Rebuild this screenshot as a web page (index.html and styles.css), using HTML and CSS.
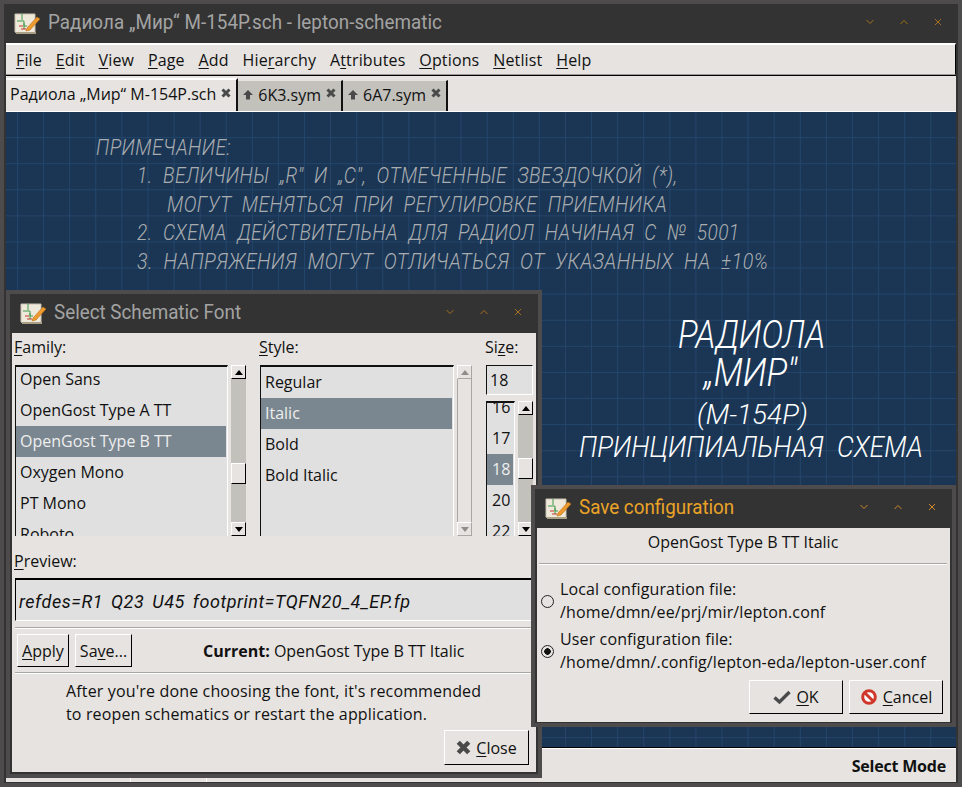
FILE: index.html
```html
<!DOCTYPE html>
<html lang="en">
<head>
    <meta charset="UTF-8">
    <title>lepton-schematic</title>
    <link rel="stylesheet" href="styles.css">
</head>
<body>
    <svg class="defs" width="0" height="0">
        <symbol id="app-icon" viewBox="0 0 26 24">
            <path d="M1 3h20v19H3l-2-1z" fill="#efe9dc" stroke="#c9c2b0"/>
            <path d="M2 22h20" stroke="#a89f85" stroke-width="2"/>
            <path d="M8 3v6M3 10h7v5h3M10 12v6" stroke="#3d9a4a" fill="none"/>
            <path d="M5 15h4M7 18h5" stroke="#c0392b" fill="none"/>
            <path d="M13 17l10-11 3 2-10 11-4 1z" fill="#ee9a2e" stroke="#b86f14" stroke-width=".6"/>
        </symbol>
        <symbol id="wm-min" viewBox="0 0 8 6"><path d="M.5 1l3.5 3.5L7.500 1" fill="none" stroke="currentColor"/></symbol>
        <symbol id="wm-max" viewBox="0 0 8 6"><path d="M.5 5L4 1.500 7.500 5" fill="none" stroke="currentColor"/></symbol>
        <symbol id="wm-close" viewBox="0 0 8 8"><path d="M1 1l6 6M7 1L1 7" fill="none" stroke="currentColor"/></symbol>
        <symbol id="x-icon" viewBox="0 0 10 10"><path d="M1.500 1.500l7 7M8.500 1.500l-7 7" fill="none" stroke="currentColor" stroke-width="3"/></symbol>
        <symbol id="up-icon" viewBox="0 0 10 10"><path d="M5 .5L10 5.500H7V10H3V5.500H0z" fill="currentColor"/></symbol>
    </svg>

    <div class="desktop">
        <div class="frame">
            <div class="titlebar">
                <svg class="app-icon"><use href="#app-icon"/></svg>
                <span class="title title-main">Радиола „Мир“ М-154Р.sch - lepton-schematic</span>
                <div class="wm-buttons">
                    <svg class="wm"><use href="#wm-min"/></svg>
                    <svg class="wm"><use href="#wm-max"/></svg>
                    <svg class="wm"><use href="#wm-close"/></svg>
                </div>
            </div>
            <div class="menubar">
                <span><u>F</u>ile</span>
                <span><u>E</u>dit</span>
                <span><u>V</u>iew</span>
                <span><u>P</u>age</span>
                <span><u>A</u>dd</span>
                <span>Hie<u>r</u>archy</span>
                <span>A<u>t</u>tributes</span>
                <span><u>O</u>ptions</span>
                <span><u>N</u>etlist</span>
                <span><u>H</u>elp</span>
            </div>
            <div class="tabbar">
                <div class="tab tab-active">Радиола „Мир“ М-154Р.sch <svg class="tab-x"><use href="#x-icon"/></svg></div>
                <div class="tab"><svg class="tab-up"><use href="#up-icon"/></svg> 6K3.sym <svg class="tab-x"><use href="#x-icon"/></svg></div>
                <div class="tab"><svg class="tab-up"><use href="#up-icon"/></svg> 6A7.sym <svg class="tab-x"><use href="#x-icon"/></svg></div>
            </div>
            <div class="canvas">
                <div class="note note-head">ПРИМЕЧАНИЕ:</div>
                <div class="note note-1">1. ВЕЛИЧИНЫ „R" И „C", ОТМЕЧЕННЫЕ ЗВЕЗДОЧКОЙ (*),</div>
                <div class="note note-1b">МОГУТ МЕНЯТЬСЯ ПРИ РЕГУЛИРОВКЕ ПРИЕМНИКА</div>
                <div class="note note-2">2. СХЕМА ДЕЙСТВИТЕЛЬНА ДЛЯ РАДИОЛ НАЧИНАЯ С № 5001</div>
                <div class="note note-3">3. НАПРЯЖЕНИЯ МОГУТ ОТЛИЧАТЬСЯ ОТ УКАЗАННЫХ НА ±10%</div>
                <div class="sheet-title title-a">РАДИОЛА</div>
                <div class="sheet-title title-b">„МИР"</div>
                <div class="sheet-title title-c">(М-154Р)</div>
                <div class="sheet-title title-d">ПРИНЦИПИАЛЬНАЯ СХЕМА</div>
            </div>
            <div class="statusbar">
                <div class="status-cell status-a"></div>
                <div class="status-cell status-b"></div>
                <div class="status-mode">Select Mode</div>
            </div>
        </div>

        <div class="dialog dialog-font">
            <div class="titlebar dialog-bar">
                <svg class="app-icon"><use href="#app-icon"/></svg>
                <span class="title title-font">Select Schematic Font</span>
                <div class="wm-buttons">
                    <svg class="wm"><use href="#wm-min"/></svg>
                    <svg class="wm"><use href="#wm-max"/></svg>
                    <svg class="wm"><use href="#wm-close"/></svg>
                </div>
            </div>
            <div class="dialog-body font-body">
                <div class="font-cols">
                    <div class="col col-family">
                        <div class="field-label"><u>F</u>amily:</div>
                        <div class="list-wrap">
                            <div class="list list-family">
                                <div class="row">Open Sans</div>
                                <div class="row">OpenGost Type A TT</div>
                                <div class="row row-sel">OpenGost Type B TT</div>
                                <div class="row">Oxygen Mono</div>
                                <div class="row">PT Mono</div>
                                <div class="row">Roboto</div>
                            </div>
                            <div class="scrollbar">
                                <div class="sb-btn"><i class="arrow-up"></i></div>
                                <div class="sb-track thumb-family"><div class="sb-thumb"></div></div>
                                <div class="sb-btn"><i class="arrow-down"></i></div>
                            </div>
                        </div>
                    </div>
                    <div class="col col-style">
                        <div class="field-label"><u>S</u>tyle:</div>
                        <div class="list-wrap">
                            <div class="list list-style">
                                <div class="row">Regular</div>
                                <div class="row row-sel">Italic</div>
                                <div class="row">Bold</div>
                                <div class="row">Bold Italic</div>
                            </div>
                            <div class="scrollbar scrollbar-off">
                                <div class="sb-btn"><i class="arrow-up"></i></div>
                                <div class="sb-track"></div>
                                <div class="sb-btn"><i class="arrow-down"></i></div>
                            </div>
                        </div>
                    </div>
                    <div class="col col-size">
                        <div class="field-label">Si<u>z</u>e:</div>
                        <div class="size-entry">18</div>
                        <div class="list-wrap size-wrap">
                            <div class="list list-size">
                                <div class="row">16</div>
                                <div class="row">17</div>
                                <div class="row row-sel">18</div>
                                <div class="row">20</div>
                                <div class="row">22</div>
                            </div>
                            <div class="scrollbar">
                                <div class="sb-btn"><i class="arrow-up"></i></div>
                                <div class="sb-track thumb-size"><div class="sb-thumb"></div></div>
                                <div class="sb-btn"><i class="arrow-down"></i></div>
                            </div>
                        </div>
                    </div>
                </div>
                <div class="field-label preview-label"><u>P</u>review:</div>
                <div class="preview">refdes=R1 Q23 U45 footprint=TQFN20_4_EP.fp</div>
                <div class="separator sep-a"></div>
                <div class="action-row">
                    <button class="btn btn-apply"><u>A</u>pply</button>
                    <button class="btn btn-save">Sa<u>v</u>e...</button>
                    <div class="current"><b>Current:</b> OpenGost Type B TT Italic</div>
                </div>
                <div class="separator sep-b"></div>
                <p class="hint">After you're done choosing the font, it's recommended<br>to reopen schematics or restart the application.</p>
                <div class="close-row">
                    <button class="btn btn-close"><svg class="close-x"><use href="#x-icon"/></svg> <span><u>C</u>lose</span></button>
                </div>
            </div>
        </div>

        <div class="dialog dialog-save">
            <div class="titlebar dialog-bar">
                <svg class="app-icon"><use href="#app-icon"/></svg>
                <span class="title title-save">Save configuration</span>
                <div class="wm-buttons wm-active">
                    <svg class="wm"><use href="#wm-min"/></svg>
                    <svg class="wm"><use href="#wm-max"/></svg>
                    <svg class="wm"><use href="#wm-close"/></svg>
                </div>
            </div>
            <div class="dialog-body save-body">
                <div class="save-font">OpenGost Type B TT Italic</div>
                <div class="separator sep-save"></div>
                <div class="radio-row">
                    <span class="radio"></span>
                    <div>Local configuration file:<br>/home/dmn/ee/prj/mir/lepton.conf</div>
                </div>
                <div class="radio-row">
                    <span class="radio radio-on"></span>
                    <div>User configuration file:<br>/home/dmn/.config/lepton-eda/lepton-user.conf</div>
                </div>
                <div class="save-buttons">
                    <button class="btn btn-big">
                        <svg class="btn-icon" viewBox="0 0 18 14"><path d="M1.500 7.500l5 4.500L16.500 2" fill="none" stroke="#4a4a4a" stroke-width="3.400"/></svg>
                        <span><u>O</u>K</span>
                    </button>
                    <button class="btn btn-big">
                        <svg class="btn-icon" viewBox="0 0 16 16"><circle cx="8" cy="8" r="6.300" fill="#fff" stroke="#d0372b" stroke-width="3"/><path d="M3.500 3.500l9 9" stroke="#d0372b" stroke-width="3"/></svg>
                        <span><u>C</u>ancel</span>
                    </button>
                </div>
            </div>
        </div>
    </div>
</body>
</html>
```

FILE: styles.css
```css
* {
    box-sizing: border-box;
}
body {
    margin: 0;
    font-family: "Open Sans", sans-serif;
    font-size: 16px;
    color: #111;
    background: #4d4b4b;
}
u {
    text-underline-offset: 2px;
}
.defs {
    position: absolute;
}
.desktop {
    position: relative;
    width: 962px;
    height: 787px;
    overflow: hidden;
}

/* main window */
.frame {
    display: flex;
    flex-direction: column;
    height: 787px;
    padding: 0 2px 1px;
    border: 4px solid #4d4b4b;
    background: #333;
}
.titlebar {
    display: flex;
    align-items: center;
    flex: none;
    height: 39px;
    padding-left: 8px;
    padding-bottom: 4px;
    background: #333;
}
.app-icon {
    width: 26px;
    height: 24px;
    margin-top: 3px;
    margin-right: 8px;
    flex: none;
}
.title {
    font-family: Roboto, sans-serif;
    font-size: 20px;
    color: #a3a3a3;
    transform: scaleX(0.94);
    transform-origin: left center;
}
.title-main {
    letter-spacing: 0.05px;
}
.wm-buttons {
    display: flex;
    gap: 26px;
    margin-left: auto;
    margin-right: 14px;
    color: #a5701f;
}
.wm-active {
    color: #d08a2c;
}
.wm {
    width: 8px;
    height: 8px;
}
.menubar {
    display: flex;
    align-items: center;
    gap: 13.800px;
    flex: none;
    height: 32px;
    padding: 1px 0 0 10px;
    letter-spacing: 0.15px;
    background: #e6e3e0;
    border-top: 2px solid #fff;
    border-bottom: 1px solid #9b9995;
    border-right: 1px solid #000;
    box-shadow: 0 1px 0 #000;
}
.tabbar {
    display: flex;
    align-items: flex-end;
    flex: none;
    height: 36px;
    margin-top: 1px;
    background: #e6e3e0;
    border-bottom: 1px solid #fff;
}
.tab {
    display: flex;
    align-items: center;
    gap: 5px;
    height: 31px;
    padding: 0 5px 3px;
    background: #c2c1bb;
    border-right: 2px solid #111;
    border-top: 1px solid #e6e3e0;
}
.tab-active {
    height: 33px;
    padding-left: 4px;
    background: #e6e3e0;
    border-top: 2px solid #fff;
}
.tab-x {
    width: 10px;
    height: 10px;
    margin-top: -3px;
    color: #4a4a4a;
}
.tab-up {
    width: 10px;
    height: 11px;
    color: #4a4a4a;
}
.canvas {
    position: relative;
    flex: 1;
    background-color: #1a3654;
    background-image:
        linear-gradient(#24456b 1px, transparent 1px),
        linear-gradient(90deg, #24456b 1px, transparent 1px);
    background-size: 26.1px 26.1px;
    background-position: 11px -1px;
    border-bottom: 1px solid #000;
}
.note {
    position: absolute;
    font-family: Roboto, sans-serif;
    font-weight: 300;
    font-style: italic;
    font-size: 22px;
    line-height: 24px;
    white-space: nowrap;
    letter-spacing: 0.5px;
    word-spacing: 6px;
    color: #aaadb0;
    transform-origin: left center;
}
.note-head { left: 90px; top: 24px; transform: scaleX(0.875); }
.note-1 { left: 131px; top: 52px; transform: scaleX(0.875); }
.note-1b { left: 161px; top: 81px; transform: scaleX(0.88); }
.note-2 { left: 131px; top: 109px; transform: scaleX(0.87); }
.note-3 { left: 131px; top: 138px; transform: scaleX(0.895); }
.sheet-title {
    position: absolute;
    font-family: Roboto, sans-serif;
    font-weight: 300;
    font-style: italic;
    white-space: nowrap;
    color: #fff;
    transform-origin: left center;
}
.title-a { left: 672px; top: 205px; font-size: 38px; line-height: 36px; transform: scaleX(0.865); }
.title-b { left: 698px; top: 243px; font-size: 38px; line-height: 36px; transform: scaleX(0.91); }
.title-c { left: 691px; top: 286px; font-size: 28px; line-height: 34px; }
.title-d { left: 573px; top: 318px; font-size: 29px; line-height: 34px; word-spacing: 8px; transform: scaleX(0.915); }
.statusbar {
    display: flex;
    align-items: center;
    flex: none;
    height: 34px;
    background: #e6e3e0;
    border-top: 1px solid #fff;
}
.status-cell {
    align-self: stretch;
    border-right: 1px solid #fff;
}
.status-a { width: 125px; }
.status-b { width: 76px; }
.status-mode {
    margin-left: auto;
    margin-right: 10px;
    font-weight: 700;
    letter-spacing: -0.2px;
}

/* dialogs */
.dialog {
    position: absolute;
    display: flex;
    flex-direction: column;
    padding: 0 2px 2px;
    border: 4px solid #4d4b4b;
    background: #333;
}
.dialog-font {
    left: 6px;
    top: 290px;
    width: 536px;
    height: 488px;
}
.dialog-save {
    left: 531px;
    top: 485px;
    width: 425px;
    height: 242px;
    padding-bottom: 1px;
}
.dialog-bar {
    padding-left: 8px;
}
.dialog-body {
    flex: 1;
    background: #e6e3e0;
}
.title-font {
    color: #a3a3a3;
}
.title-save {
    color: #eba327;
}

/* font dialog */
.font-body {
    padding: 3px 3px 0;
}
.font-cols {
    display: flex;
    gap: 14px;
}
.col-family { width: 231px; }
.col-style { width: 212px; }
.col-size { width: 47px; }
.field-label {
    height: 22px;
    margin-bottom: 7px;
    line-height: 22px;
    margin-left: -1px;
}
.list-wrap {
    display: flex;
    gap: 3px;
    height: 171px;
}
.size-wrap {
    height: 135px;
    margin-top: 6px;
}
.list {
    flex: 1;
    min-width: 0;
    overflow: hidden;
    padding-right: 1px;
    background: #e0e0e0;
    border: 1px solid #111;
    border-width: 2px 1px 0 1px;
    border-right-color: #fff;
}
.row {
    height: 31px;
    padding-left: 4px;
    line-height: 31px;
    white-space: nowrap;
}
.list-family .row:first-child {
    margin-top: -3px;
}
.list-size .row {
    padding-left: 5px;
}
.list-size .row:first-child {
    margin-top: -11px;
}
.row-sel {
    background: #7b8790;
    color: #eee;
}
.scrollbar {
    display: flex;
    flex-direction: column;
    flex: none;
    width: 15px;
    background: #c2c1bb;
}
.sb-btn {
    display: flex;
    align-items: center;
    justify-content: center;
    flex: none;
    height: 14px;
    background: #e6e3e0;
    border: 1px solid #000;
    border-top-color: #fff;
    border-left-color: #fff;
}
.sb-track {
    flex: 1;
}
.thumb-family {
    padding-top: 84px;
}
.thumb-size {
    padding-top: 43px;
}
.sb-thumb {
    height: 21px;
    background: #e6e3e0;
    border: 1px solid #000;
    border-top-color: #fff;
    border-left-color: #fff;
}
.arrow-up, .arrow-down {
    width: 0;
    height: 0;
    border-left: 4px solid transparent;
    border-right: 4px solid transparent;
}
.arrow-up { border-bottom: 5px solid #000; }
.arrow-down { border-top: 5px solid #000; }
.scrollbar-off {
    background: #e6e3e0;
    border: 1px solid #a9a7a3;
    border-top: 0;
    border-bottom: 0;
}
.scrollbar-off .sb-btn {
    margin: 0 -1px;
    border-color: #a9a7a3;
    border-top-color: #fff;
    border-left-color: #fff;
}
.scrollbar-off .arrow-up { border-bottom-color: #8f8d8a; }
.scrollbar-off .arrow-down { border-top-color: #8f8d8a; }
.size-entry {
    height: 30px;
    padding-left: 3px;
    line-height: 29px;
    background: #e0e0e0;
    border: 1px solid #111;
    border-right-color: #fff;
    border-bottom-color: #fff;
}
.preview-label {
    margin-top: 15px;
    margin-bottom: 5px;
    line-height: 21px;
}
.preview {
    height: 43px;
    padding-left: 3px;
    line-height: 43px;
    font-family: Roboto, sans-serif;
    font-style: italic;
    font-size: 18px;
    letter-spacing: 0.55px;
    word-spacing: 3px;
    white-space: nowrap;
    background: #e0e0e0;
    border: 1px solid #000;
    border-top-width: 2px;
    border-right-color: #fff;
    border-bottom-color: #fff;
}
.separator {
    height: 2px;
    background: #aaa8a4;
    border-bottom: 1px solid #fff;
}
.sep-a {
    margin-top: 6px;
}
.action-row {
    display: flex;
    align-items: center;
    height: 43px;
    padding-left: 2px;
}
.btn {
    display: flex;
    align-items: center;
    justify-content: center;
    padding: 0;
    font: inherit;
    color: #111;
    background: #e6e3e0;
    border: 1px solid #000;
    border-top-color: #fff;
    border-left-color: #fff;
}
.btn-apply {
    width: 52px;
    height: 33px;
    margin-right: 6px;
}
.btn-save {
    width: 57px;
    height: 33px;
}
.current {
    margin-left: 71px;
}
.hint {
    margin: 6px 0 0 51px;
    line-height: 23px;
    letter-spacing: 0.15px;
}
.close-row {
    display: flex;
    justify-content: flex-end;
    margin-top: 4px;
    padding-right: 4px;
}
.btn-close {
    width: 85px;
    height: 35px;
    gap: 5px;
}
.close-x {
    width: 15px;
    height: 15px;
    color: #4a4a4a;
}

/* save dialog */
.save-body {
    padding: 3px 3px 0 2px;
}
.save-font {
    height: 22px;
    line-height: 22px;
    text-align: center;
}
.sep-save {
    margin-top: 10px;
}
.radio-row {
    display: flex;
    align-items: center;
    gap: 6px;
    height: 50px;
    padding-left: 1px;
    line-height: 23px;
    letter-spacing: 0.13px;
}
.sep-save + .radio-row {
    margin-top: 11px;
}
.radio {
    flex: none;
    width: 13px;
    height: 13px;
    margin-left: 1px;
    border: 1px solid #222;
    border-radius: 50%;
    background: #e6e3e0;
}
.radio-on {
    background: radial-gradient(circle, #111 3px, #e6e3e0 3.5px);
}
.save-buttons {
    display: flex;
    justify-content: flex-end;
    gap: 6px;
    margin-top: 4px;
    padding-right: 4px;
}
.btn-big {
    width: 94px;
    height: 34px;
    gap: 5px;
}
.btn-icon {
    width: 18px;
    height: 16px;
}
```
